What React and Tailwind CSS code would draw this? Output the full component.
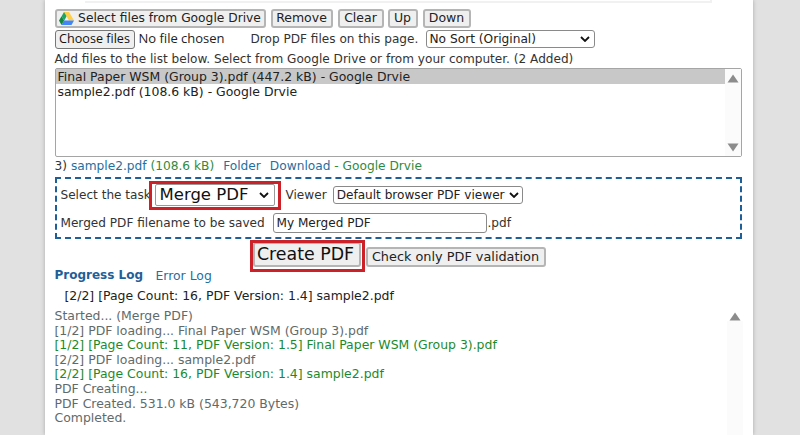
function Btn({ children, className = "" }) {
  return (
    <button className={"flex items-center justify-center h-[19px] whitespace-nowrap bg-[#efefef] border-2 border-[#b5b5b5] rounded-[3px] text-[12.5px] leading-none text-[#222] " + className}>
      {children}
    </button>
  );
}
function Up({ className = "" }) {
  return <svg width="12" height="9" viewBox="0 0 12 9" className={className}><path d="M6 0.5 L11.5 8.5 H0.5 Z" fill="#8c8c8c" /></svg>;
}
function Down({ className = "" }) {
  return <svg width="12" height="9" viewBox="0 0 12 9" className={className}><path d="M6 8.5 L11.5 0.5 H0.5 Z" fill="#8c8c8c" /></svg>;
}
function Chevron({ className = "" }) {
  return <svg width="10" height="6" viewBox="0 0 10 6" className={"shrink-0 " + className}><path d="M1 1 L5 5 L9 1" fill="none" stroke="#111" strokeWidth="1.8" /></svg>;
}
function Drive() {
  return (
    <svg width="15" height="13" viewBox="0 0 15 13" className="shrink-0">
      <path d="M5 0 H10 L5.2 8.5 L2.6 4.2 Z" fill="#1fa463" />
      <path d="M10 0 L15 8.5 H10 L5 0 Z" fill="#ffcf48" />
      <path d="M15 8.5 L12.5 13 H2.5 L5 8.5 Z" fill="#4285f4" />
      <path d="M2.5 13 L0 8.5 L2.6 4.2 L5.1 8.5 Z" fill="#11873f" />
    </svg>
  );
}
export default function App() {
  return (
    <div className="w-[800px] h-[435px] overflow-hidden bg-[#e1e1e1] flex justify-center font-['DejaVu_Sans',sans-serif] text-[12.1px] text-[#333]">
      <div className="w-[708px] ml-[-3px] h-full bg-white shadow-[0_0_4px_rgba(0,0,0,0.25)] px-[10px] flex flex-col">
        <div className="h-[3px] ml-[30px] border-b-2 border-r-2 border-[#f1f1f1] w-[627px]" />
        <div className="flex mt-[6px] h-[19px]">
          <Btn className="w-[211px] gap-[4px]"><Drive /><span className="text-[12.25px]">Select files from Google Drive</span></Btn>
          <Btn className="w-[62px] ml-[5px]">Remove</Btn>
          <Btn className="w-[46px] ml-[5px]">Clear</Btn>
          <Btn className="w-[30px] ml-[4px]">Up</Btn>
          <Btn className="w-[48px] ml-[5px]">Down</Btn>
        </div>
        <div className="flex items-center mt-[1px] h-[20px]">
          <button className="w-[80px] h-[19px] bg-[#efefef] border border-[#777] rounded-[3px] font-['Open_Sans',sans-serif] text-[12.6px] leading-none text-[#111]">Choose files</button>
          <span className="ml-[4px] w-[112px] text-[13px] text-[#222] font-['Open_Sans',sans-serif]">No file chosen</span>
          <span className="w-[175px]">Drop PDF files on this page.</span>
          <div className="w-[169px] h-[18px] border border-[#8a8a8a] rounded-[3px] flex items-center justify-between pl-[3px] pr-[4px] text-[#222] text-[12.2px]">
            <span>No Sort (Original)</span><Chevron />
          </div>
        </div>
        <div className="mt-[1px] h-[18px] leading-[18px]">Add files to the list below. Select from Google Drive or from your computer. (2 Added)</div>
        <div className="h-[89px] w-[687px] border border-[#a5a5a5] rounded-[2px] flex text-[12.45px]">
          <div className="flex-1 flex flex-col leading-[15px]">
            <div className="h-[15px] pl-[2px] bg-[#c8c8c8] text-[#222]">Final Paper WSM (Group 3).pdf (447.2 kB) - Google Drvie</div>
            <div className="h-[15px] pl-[2px] text-[#222]">sample2.pdf (108.6 kB) - Google Drvie</div>
          </div>
          <div className="w-[16px] bg-[#fbfbfb] flex flex-col items-center justify-between pt-[5px] pb-[4px]"><Up /><Down /></div>
        </div>
        <div className="mt-[1px] h-[17px] leading-[17px] whitespace-nowrap text-[12.2px]">
          <span className="text-[#333]">3) </span>
          <span className="text-[#1f6f9f]">sample2.pdf</span>
          <span className="text-[#2e8b3d]"> (108.6 kB)</span>
          <span className="text-[#1f6f9f] ml-[9px]">Folder</span>
          <span className="text-[#1f6f9f] ml-[9px]">Download</span>
          <span className="text-[#2e8b3d]"> - Google Drvie</span>
        </div>
        <div className="mt-[2px] h-[62px] w-[687px] border-2 border-dashed border-[#1f5f99] flex flex-col pl-[4px]">
          <div className="flex items-center h-[32px]">
            <span className="w-[94px] whitespace-nowrap">Select the task</span>
            <div className="relative w-[120px] h-[22px] border border-[#9a9a9a] rounded-[2px] flex items-center justify-between pl-[4px] pr-[5px] text-[16.5px] text-[#111]">
              <span>Merge PDF</span><Chevron />
              <div className="absolute -left-[7px] -right-[7px] -top-[4px] -bottom-[5px] border-3 border-[#cc2129]" />
            </div>
            <span className="ml-[11px]">Viewer</span>
            <div className="ml-[6px] w-[190px] h-[18px] border border-[#8a8a8a] rounded-[3px] flex items-center justify-between pl-[3px] pr-[3px] text-[#222] whitespace-nowrap">
              <span>Default browser PDF viewer</span><Chevron />
            </div>
          </div>
          <div className="flex items-center h-[24px]">
            <span className="w-[212px] whitespace-nowrap">Merged PDF filename to be saved</span>
            <div className="w-[214px] h-[20px] border border-[#8a8a8a] rounded-[3px] pl-[3px] leading-[18px] text-[#222]">My Merged PDF</div>
            <span className="ml-[1px]">.pdf</span>
          </div>
        </div>
        <div className="flex items-end mt-[3px] ml-[198px] h-[25px]">
          <button className="relative w-[108px] h-[25px] pr-[2px] bg-[#efefef] border-2 border-[#b5b5b5] rounded-[3px] text-[17.4px] leading-none text-[#111] whitespace-nowrap">
            Create PDF
            <div className="absolute -left-[5px] -right-[6px] -top-[4px] -bottom-[7px] border-3 border-[#cc2129]" />
          </button>
          <button className="ml-[5px] w-[180px] h-[20px] bg-[#efefef] border-2 border-[#b5b5b5] rounded-[3px] text-[12.85px] leading-none text-[#222] whitespace-nowrap">Check only PDF validation</button>
        </div>
        <div className="flex h-[17px] leading-[17px]">
          <span className="font-bold text-[#1f5f99] text-[12px] w-[88px] whitespace-nowrap">Progress Log</span>
          <span className="ml-[13px] text-[#1f6f9f] text-[12.4px]">Error Log</span>
        </div>
        <div className="mt-[3px] ml-[10px] h-[18px] leading-[18px] text-[#222] text-[12.45px]">[2/2] [Page Count: 16, PDF Version: 1.4] sample2.pdf</div>
        <div className="flex flex-1 min-h-0 text-[12.45px]">
          <div className="flex-1 leading-[14.6px] text-[#5f6b6b] pt-[4px] whitespace-nowrap">
            <div>Started... (Merge PDF)</div>
            <div>[1/2] PDF loading... Final Paper WSM (Group 3).pdf</div>
            <div className="text-[#1c8a2c]">[1/2] [Page Count: 11, PDF Version: 1.5] Final Paper WSM (Group 3).pdf</div>
            <div>[2/2] PDF loading... sample2.pdf</div>
            <div className="text-[#1c8a2c]">[2/2] [Page Count: 16, PDF Version: 1.4] sample2.pdf</div>
            <div>PDF Creating...</div>
            <div>PDF Created. 531.0 kB (543,720 Bytes)</div>
            <div>Completed.</div>
          </div>
          <div className="w-[16px] flex flex-col items-center pt-[7px]">
            <Up />
            <div className="flex-1 w-full bg-[#fbfbfb]" />
          </div>
        </div>
      </div>
    </div>
  );
}
